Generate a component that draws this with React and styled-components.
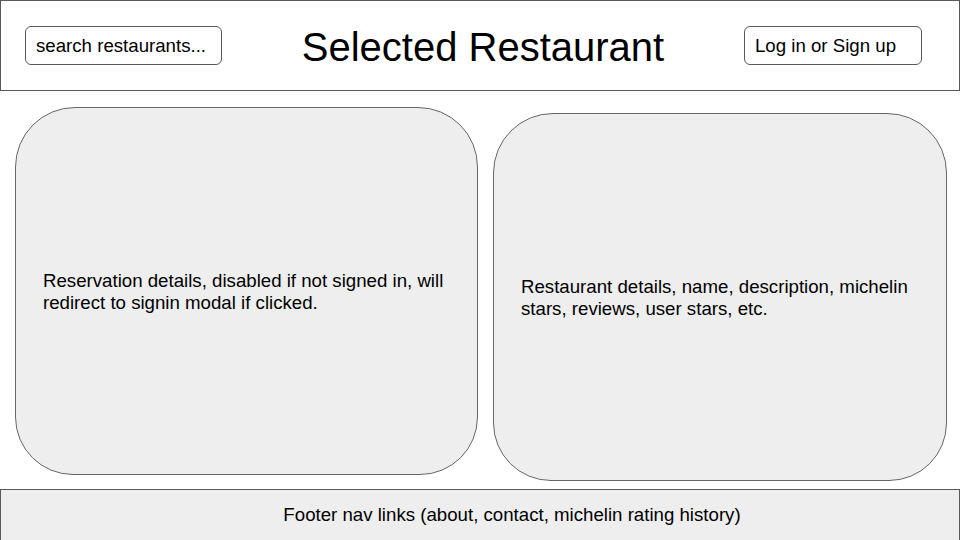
import React from "react"
import styled, { createGlobalStyle } from "styled-components"

const GlobalStyle = createGlobalStyle`
  html, body {
    margin: 0;
    padding: 0;
    background: #ffffff;
  }
  body {
    font-family: "Liberation Sans", Arial, sans-serif;
    color: #000000;
  }
`

const App = () => (
  <>
    <GlobalStyle />
    <Page>
      <Header>
        <PillBox width="197px">search restaurants...</PillBox>
        <Title>Selected Restaurant</Title>
        <PillBox width="178px">Log in or Sign up</PillBox>
      </Header>
      <Main>
        <Card width="463px" offset="0px">
          <CardText>
            Reservation details, disabled if not signed in, will redirect to
            signin modal if clicked.
          </CardText>
        </Card>
        <Card width="454px" offset="6px">
          <CardText>
            Restaurant details, name, description, michelin stars, reviews,
            user stars, etc.
          </CardText>
        </Card>
      </Main>
      <Footer>Footer nav links (about, contact, michelin rating history)</Footer>
    </Page>
  </>
)

const Page = styled.div`
  width: 960px;
  height: 540px;
  display: flex;
  flex-direction: column;
  overflow: hidden;
`

const Header = styled.header`
  box-sizing: border-box;
  height: 91px;
  border: 1px solid #595959;
  display: flex;
  align-items: center;
  justify-content: space-between;
  padding: 0 37px 0 24px;
`

const PillBox = styled.div`
  box-sizing: border-box;
  width: ${({ width }) => width};
  height: 39px;
  border: 1px solid #595959;
  border-radius: 6px;
  display: flex;
  align-items: center;
  padding-left: 10px;
  padding-top: 1px;
  font-size: 18.67px;
`

const Title = styled.h1`
  margin: 0;
  font-weight: normal;
  font-size: 40px;
  line-height: 1;
  padding-top: 2px;
`

const Main = styled.main`
  flex: 1;
  display: flex;
  align-items: flex-start;
  gap: 15px;
  padding: 16px 0 0 15px;
`

const Card = styled.section`
  box-sizing: border-box;
  width: ${({ width }) => width};
  height: 368px;
  margin-top: ${({ offset }) => offset};
  background: #eeeeee;
  border: 1px solid #666666;
  border-radius: 60px 60px 58px 58px;
  display: flex;
  align-items: center;
  padding: 1px 26px 0 27px;
`

const CardText = styled.p`
  margin: 0;
  font-size: 18.67px;
  line-height: 22px;
`

const Footer = styled.footer`
  box-sizing: border-box;
  height: 51px;
  background: #eeeeee;
  border: 1px solid #595959;
  border-bottom: none;
  display: flex;
  justify-content: center;
  padding: 14px 0 0 64px;
  font-size: 18.67px;
`

export default App
